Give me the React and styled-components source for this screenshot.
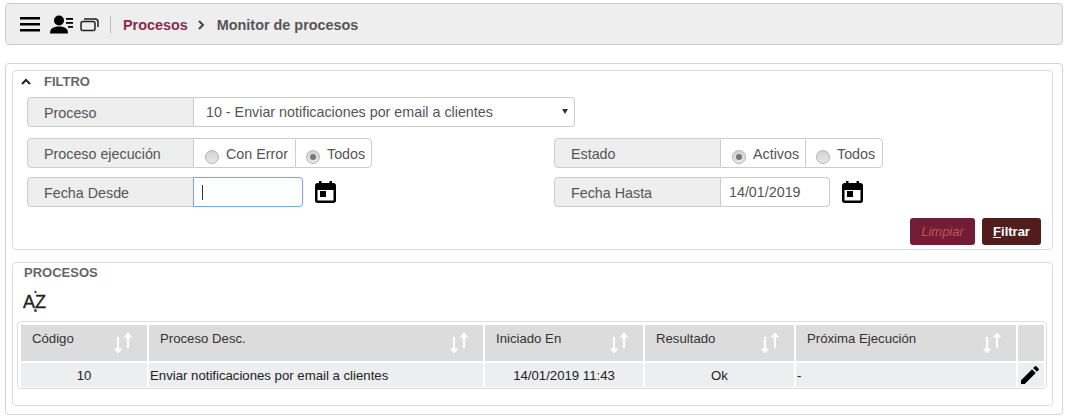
import React from "react";
import styled, { createGlobalStyle } from "styled-components";

const GlobalStyle = createGlobalStyle`
  html, body { margin: 0; padding: 0; background: #fff; }
  body { font-family: "Liberation Sans", Arial, sans-serif; color: #555; font-size: 14.3px; }
`;

const Page = styled.div`
  width: 1070px;
  height: 419px;
  overflow: hidden;
  padding: 3px 7px 0 5px;
  box-sizing: border-box;
`;

const TopBar = styled.div`
  height: 42px;
  box-sizing: border-box;
  background: #eee;
  border: 1px solid #ccc;
  border-radius: 4px;
  display: flex;
  align-items: center;
  padding-left: 14px;
`;

const Icons = styled.div`
  display: flex;
  align-items: center;
  gap: 6px;
  height: 17px;
  padding-right: 11px;
  margin-right: 12px;
  border-right: 1px solid #bbb;
  svg { display: block; }
`;

const Crumb = styled.span`
  font-size: 14.4px;
  font-weight: bold;
  padding-top: 1px;
  color: ${(p) => p.$color};
`;

const Chevron = styled.svg`
  margin: 2px 12px 0 10px;
`;

const Outer = styled.div`
  margin-top: 18px;
  height: 352px;
  box-sizing: border-box;
  border: 1px solid #d4d4d4;
  border-radius: 4px;
  padding: 6px 9px 0 6px;
`;

const Panel = styled.section`
  border: 1px solid #ddd;
  border-radius: 4px;
  box-sizing: border-box;
  height: ${(p) => p.$height}px;
  margin-bottom: 12px;
`;

const PanelTitle = styled.div`
  height: ${(p) => p.$height}px;
  display: flex;
  align-items: center;
  padding-left: ${(p) => p.$pad}px;
  gap: 13px;
  font-size: 13px;
  font-weight: bold;
  color: #666;
`;

const Fields = styled.div`
  padding: 5px 11px 0 14px;
`;

const Row = styled.div`
  display: flex;
  margin-top: ${(p) => p.$top || 0}px;
`;

const Col = styled.div`
  width: 527px;
  flex: none;
  display: flex;
  align-items: center;
`;

const Group = styled.div`
  display: flex;
  height: 30px;
  box-sizing: border-box;
  width: ${(p) => (p.$width ? p.$width + "px" : "auto")};
`;

const Label = styled.div`
  width: 167px;
  flex: none;
  box-sizing: border-box;
  background: #eee;
  border: 1px solid #ccc;
  border-radius: 4px 0 0 4px;
  padding-left: 16px;
  line-height: 30px;
  color: #555;
`;

const SelectBox = styled.div`
  flex: 1;
  position: relative;
  border: 1px solid #ccc;
  border-left: 0;
  border-radius: 0 4px 4px 0;
  padding-left: 12px;
  line-height: 28px;
  color: #555;
  &::after {
    content: "";
    position: absolute;
    right: 6px;
    top: 11px;
    border-left: 3px solid transparent;
    border-right: 3px solid transparent;
    border-top: 5px solid #333;
  }
`;

const RadioCell = styled.label`
  display: flex;
  align-items: center;
  box-sizing: border-box;
  width: ${(p) => p.$width}px;
  border: 1px solid #ccc;
  border-left: ${(p) => (p.$first ? 0 : "1px solid #ccc")};
  border-right: ${(p) => (p.$last ? "1px solid #ccc" : 0)};
  border-radius: ${(p) => (p.$last ? "0 4px 4px 0" : 0)};
  padding: 2px 0 0 ${(p) => (p.$first ? 11 : 10)}px;
  color: #555;
  white-space: nowrap;
`;

const RadioDot = styled.span`
  flex: none;
  width: 14px;
  height: 14px;
  margin: 5px 7px 0 0;
  box-sizing: border-box;
  border-radius: 50%;
  border: 1px solid #b4b4b4;
  background: linear-gradient(#d2d2d2, #e8e8e8);
  display: flex;
  align-items: center;
  justify-content: center;
  &::after {
    content: "";
    display: ${(p) => (p.$checked ? "block" : "none")};
    width: 6px;
    height: 6px;
    border-radius: 50%;
    background: #777;
  }
`;

const DateInput = styled.div`
  width: ${(p) => (p.$focus ? 110 : 109)}px;
  margin-left: ${(p) => (p.$focus ? -1 : 0)}px;
  box-sizing: border-box;
  height: 30px;
  padding-left: ${(p) => (p.$focus ? 8 : 8)}px;
  border: 1px solid ${(p) => (p.$focus ? "#7aa7ec" : "#ccc")};
  border-left: ${(p) => (p.$focus ? "1px solid #7aa7ec" : 0)};
  border-radius: 0 4px 4px 0;
  box-shadow: ${(p) => (p.$focus ? "0 0 1px #9fc0f2" : "none")};
  color: #555;
  display: flex;
  align-items: center;
`;

const Caret = styled.span`
  width: 1px;
  height: 15px;
  background: #333;
`;

const CalendarIcon = styled.svg`
  margin-left: 12px;
  flex: none;
`;

const Actions = styled.div`
  display: flex;
  justify-content: flex-end;
  gap: 7px;
  margin-top: 11px;
`;

const Button = styled.button`
  height: 27px;
  width: ${(p) => p.$width}px;
  border: 0;
  border-radius: 3px;
  padding: 0;
  font-family: inherit;
  font-size: 13px;
  background: ${(p) => (p.$muted ? "#721c35" : "#521c1c")};
  color: ${(p) => (p.$muted ? "#c5525c" : "#fff")};
  font-style: ${(p) => (p.$muted ? "italic" : "normal")};
  font-weight: ${(p) => (p.$muted ? "normal" : "bold")};
`;

const SortBar = styled.div`
  height: 39px;
  padding: 7px 0 0 10px;
  box-sizing: border-box;
  svg { display: block; }
`;

const TableWrap = styled.div`
  margin: 0 5px 0 4px;
  border: 1px solid #ddd;
  border-radius: 4px;
  padding: 3px 2px 0 3px;
  height: 68px;
  box-sizing: border-box;
`;

const Table = styled.div`
  display: grid;
  grid-template-columns: 126px 334px 158px 149px 220px 26px;
  grid-template-rows: 36px 24px;
  gap: 2px;
`;

const HeadCell = styled.div`
  position: relative;
  background: #dcdcdc;
  color: #333;
  font-size: 13.2px;
  padding: 6px 0 0 11px;
`;

const SortIcon = styled.svg`
  position: absolute;
  right: 15px;
  top: 8px;
`;

const BodyCell = styled.div`
  background: #eceef0;
  color: #222;
  font-size: 13.2px;
  padding-left: ${(p) => (p.$center ? 0 : 1)}px;
  overflow: hidden;
  display: flex;
  align-items: center;
  justify-content: ${(p) => (p.$center ? "center" : "flex-start")};
`;

const PencilIcon = styled.svg`
  flex: none;
  margin-right: 2px;
`;

const Calendar = () => (
  <CalendarIcon width="21" height="22" viewBox="0 0 21 22">
    <rect x="1.250" y="3.250" width="18.500" height="17.500" rx="1.500" fill="none" stroke="#000" strokeWidth="2.500" />
    <rect x="1" y="3" width="19" height="6" fill="#000" />
    <rect x="4" y="0" width="2.500" height="4" fill="#000" />
    <rect x="14.500" y="0" width="2.500" height="4" fill="#000" />
    <rect x="5" y="10" width="6" height="6" fill="#000" />
  </CalendarIcon>
);

const Sort = () => (
  <SortIcon width="18" height="20" viewBox="0 0 18 20" fill="none" stroke="#fff" strokeWidth="2">
    <path d="M4 4v15M1 15.500 4 19l3-3.500" />
    <path d="M14 15V1M11 4.500 14 1l3 3.500" />
  </SortIcon>
);

const columns = ["Código", "Proceso Desc.", "Iniciado En", "Resultado", "Próxima Ejecución"];

export default function App() {
  return (
    <Page>
      <GlobalStyle />
      <TopBar>
        <Icons>
          <svg width="24" height="15" viewBox="0 0 24 15" fill="#000">
            <rect x="0" y="0" width="20" height="2.500" />
            <rect x="0" y="6" width="20" height="2.500" />
            <rect x="0" y="12" width="20" height="2.500" />
          </svg>
          <svg width="24" height="19" viewBox="0 0 24 19" fill="#000">
            <circle cx="9" cy="5.500" r="5" />
            <path d="M0 18.500c0-5 3-7 9-7s9 2 9 7z" />
            <rect x="16" y="3" width="7" height="1.800" />
            <rect x="16" y="7" width="7" height="1.800" />
            <rect x="18" y="11" width="5" height="1.800" />
          </svg>
          <svg width="19" height="15" viewBox="0 0 19 15" fill="none" stroke="#222" strokeWidth="1.500">
            <rect x="1" y="4.500" width="14" height="9" rx="2" />
            <path d="M4 2h11a3 3 0 0 1 3 3v5" />
          </svg>
        </Icons>
        <Crumb $color="#8a2c4f">Procesos</Crumb>
        <Chevron width="7" height="10" viewBox="0 0 7 10" fill="none" stroke="#444" strokeWidth="2">
          <path d="M1 1l4 4-4 4" />
        </Chevron>
        <Crumb $color="#555">Monitor de procesos</Crumb>
      </TopBar>

      <Outer>
        <Panel $height={180}>
          <PanelTitle $pad={8} $height={21}>
            <svg width="10" height="7" viewBox="0 0 10 7" fill="none" stroke="#222" strokeWidth="2">
              <path d="M1 6l4-4 4 4" />
            </svg>
            FILTRO
          </PanelTitle>
          <Fields>
            <Group $width={548}>
              <Label>Proceso</Label>
              <SelectBox>10 - Enviar notificaciones por email a clientes</SelectBox>
            </Group>
            <Row $top={11}>
              <Col>
                <Group>
                  <Label>Proceso ejecución</Label>
                  <RadioCell $first $width={101}>
                    <RadioDot />Con Error
                  </RadioCell>
                  <RadioCell $last $width={77}>
                    <RadioDot $checked />Todos
                  </RadioCell>
                </Group>
              </Col>
              <Col>
                <Group>
                  <Label>Estado</Label>
                  <RadioCell $first $width={84}>
                    <RadioDot $checked />Activos
                  </RadioCell>
                  <RadioCell $last $width={78}>
                    <RadioDot />Todos
                  </RadioCell>
                </Group>
              </Col>
            </Row>
            <Row $top={9}>
              <Col>
                <Group>
                  <Label>Fecha Desde</Label>
                  <DateInput $focus><Caret /></DateInput>
                </Group>
                <Calendar />
              </Col>
              <Col>
                <Group>
                  <Label>Fecha Hasta</Label>
                  <DateInput>14/01/2019</DateInput>
                </Group>
                <Calendar />
              </Col>
            </Row>
            <Actions>
              <Button $muted $width={65}>Limpiar</Button>
              <Button $width={59}><u>F</u>iltrar</Button>
            </Actions>
          </Fields>
        </Panel>

        <Panel $height={144}>
          <PanelTitle $pad={11} $height={19}>PROCESOS</PanelTitle>
          <SortBar>
            <svg width="26" height="24" viewBox="0 0 26 24">
              <text x="0" y="19" fontFamily="Liberation Sans" fontSize="18" fill="#222" stroke="#222" strokeWidth="0.4">A</text>
              <text x="12" y="19" fontFamily="Liberation Sans" fontSize="18" fill="#222" stroke="#222" strokeWidth="0.4">Z</text>
              <circle cx="12.500" cy="3" r="1.200" fill="#444" />
              <circle cx="12.500" cy="21.500" r="1.500" fill="#444" />
            </svg>
          </SortBar>
          <TableWrap>
            <Table>
              {columns.map((name) => (
                <HeadCell key={name}>
                  {name}
                  <Sort />
                </HeadCell>
              ))}
              <HeadCell />
              <BodyCell $center>10</BodyCell>
              <BodyCell>Enviar notificaciones por email a clientes</BodyCell>
              <BodyCell $center>14/01/2019 11:43</BodyCell>
              <BodyCell $center>Ok</BodyCell>
              <BodyCell>-</BodyCell>
              <BodyCell $center>
                <PencilIcon width="24" height="24" viewBox="0 0 24 24" fill="#000">
                  <path d="M3 17.250V21h3.750L17.810 9.940l-3.750-3.750L3 17.250zM20.710 7.040a1 1 0 0 0 0-1.410l-2.340-2.340a1 1 0 0 0-1.410 0l-1.830 1.830 3.750 3.750 1.830-1.830z" />
                </PencilIcon>
              </BodyCell>
            </Table>
          </TableWrap>
        </Panel>
      </Outer>
    </Page>
  );
}
